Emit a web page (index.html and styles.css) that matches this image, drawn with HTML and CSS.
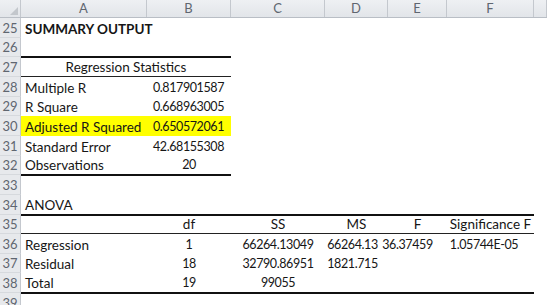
FILE: index.html
```html
<!DOCTYPE html>
<html>
<head>
<meta charset="utf-8">
<link rel="stylesheet" href="styles.css">
</head>
<body>
<div class="sheet">
  <div class="row head">
    <div class="corner"><svg width="10" height="10" viewBox="0 0 10 10"><polygon points="9,1 9,9 1,9" fill="#c3c7cc"/></svg></div>
    <div class="col">A</div><div class="col">B</div><div class="col">C</div><div class="col">D</div><div class="col">E</div><div class="col">F</div><div class="col"></div>
  </div>

  <div class="row h20"><div class="rn">25</div><div class="c l b">SUMMARY OUTPUT</div></div>
  <div class="row h19"><div class="rn">26</div><div class="c thick"></div><div class="c thick"></div></div>
  <div class="row h20"><div class="rn">27</div><div class="c m thin">Regression Statistics</div></div>
  <div class="row h20"><div class="rn">28</div><div class="c l">Multiple R</div><div class="c r n">0.817901587</div></div>
  <div class="row h19"><div class="rn">29</div><div class="c l">R Square</div><div class="c r n">0.668963005</div></div>
  <div class="row h20"><div class="rn">30</div><div class="c l hl">Adjusted R Squared</div><div class="c r n hl">0.650572061</div></div>
  <div class="row h20"><div class="rn">31</div><div class="c l">Standard Error</div><div class="c r n">42.68155308</div></div>
  <div class="row h19"><div class="rn">32</div><div class="c l thick">Observations</div><div class="c ctr n thick">20</div></div>
  <div class="row h20"><div class="rn">33</div></div>
  <div class="row h20"><div class="rn">34</div><div class="c l thick">ANOVA</div><div class="c thick"></div><div class="c thick"></div><div class="c thick"></div><div class="c thick"></div><div class="c thick"></div></div>
  <div class="row h19"><div class="rn">35</div><div class="c thin"></div><div class="c ctr thin">df</div><div class="c ctr thin">SS</div><div class="c ctr thin">MS</div><div class="c ctr thin">F</div><div class="c ctr thin">Significance F</div></div>
  <div class="row h20"><div class="rn">36</div><div class="c l">Regression</div><div class="c ctr n">1</div><div class="c ctr n">66264.13049</div><div class="c ctr n sd">66264.13</div><div class="c ctr n se">36.37459</div><div class="c ctr n sf">1.05744E-05</div></div>
  <div class="row h19"><div class="rn">37</div><div class="c l">Residual</div><div class="c ctr n">18</div><div class="c ctr n">32790.86951</div><div class="c ctr n sd">1821.715</div></div>
  <div class="row h20"><div class="rn">38</div><div class="c l thick">Total</div><div class="c ctr n thick">19</div><div class="c ctr n thick">99055</div><div class="c thick"></div><div class="c thick"></div><div class="c thick"></div></div>
  <div class="row h20"><div class="rn">39</div></div>
</div>
</body>
</html>
```
FILE: styles.css
```css
html, body {
  margin: 0;
  padding: 0;
  background: #ffffff;
  overflow: hidden;
}
.sheet {
  width: 547px;
  height: 305px;
  overflow: hidden;
  font-family: Lato, "Liberation Sans", sans-serif;
  font-size: 13.5px;
  color: #161616;
}
.row {
  display: grid;
  grid-template-columns: 21px 126px 84px 94px 63px 59px 87px 13px;
}
.h20 { height: 20px; }
.h19 { height: 19px; }
.head {
  height: 18px;
  background: linear-gradient(#eef0f3, #e2e5e9);
  border-bottom: 1px solid #b9bec5;
  box-sizing: border-box;
}
.corner {
  border-right: 1px solid #c4c8ce;
  display: flex;
  align-items: flex-end;
  justify-content: flex-end;
  padding: 0 1px 1px 0;
}
.col {
  border-right: 1px solid #c4c8ce;
  color: #5f6670;
  font-size: 13px;
  line-height: 17px;
  text-align: center;
}
.rn {
  background: #e7e9ec;
  border-right: 1px solid #c4c8ce;
  border-bottom: 1px solid #d6d9dd;
  color: #5f6670;
  font-size: 13px;
  text-align: center;
  display: flex;
  align-items: flex-end;
  justify-content: center;
  line-height: 16px;
  padding-bottom: 1px;
  box-sizing: border-box;
}
.c {
  display: flex;
  align-items: flex-end;
  line-height: 16px;
  padding-bottom: 1px;
  white-space: nowrap;
  box-sizing: border-box;
  min-width: 0;
}
.n { font-size: 12.5px; letter-spacing: -0.4px; }
.l { justify-content: flex-start; padding-left: 4px; }
.r { justify-content: flex-end; padding-right: 7px; }
.ctr { justify-content: center; }
.m { grid-column: span 2; justify-content: center; }
.b { font-weight: 700; }
.hl { background: #ffff00; }
.thick {
  border-bottom: 1px solid #111;
  box-shadow: 0 1px 0 #111;
}
.thin { border-bottom: 1px solid #222; }
.sd { padding-right: 8px; }
.se { padding-right: 20px; }
.sf { padding-right: 13px; }
```
